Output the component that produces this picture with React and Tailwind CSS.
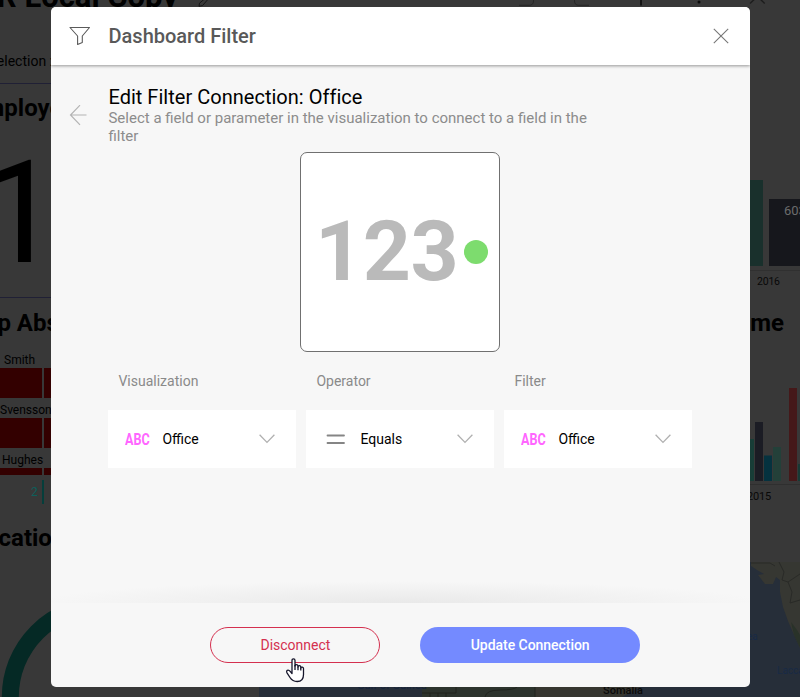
function FilterIcon() {
  return (
    <svg width="22" height="20" viewBox="0 0 22 20" fill="none" stroke="#5a5a5a" strokeWidth="1.1" strokeLinejoin="round">
      <path d="M1 1.5H20.5L13.3 10V16.5L8.6 18.5V10Z" />
    </svg>
  );
}

function CloseIcon() {
  return (
    <svg width="16" height="16" viewBox="0 0 16 16" stroke="#777" strokeWidth="1.1">
      <path d="M0.8 0.8 15.2 15.2M15.2 0.8 0.8 15.2" />
    </svg>
  );
}

function BackIcon() {
  return (
    <svg width="18" height="21" viewBox="0 0 18 21" fill="none" stroke="#b4b4b4" strokeWidth="1.2">
      <path d="M17.5 10H1.5M11 0.2 1.5 10 11 19.8" />
    </svg>
  );
}

function Chevron() {
  return (
    <svg width="16" height="10" viewBox="0 0 16 10" fill="none" stroke="#b0b0b0" strokeWidth="1.3">
      <path d="M0.6 0.8 8 8.4 15.4 0.8" />
    </svg>
  );
}

function AbcIcon() {
  return (
    <span className="flex w-[25px] items-center text-[17px] leading-none font-bold text-[#ff66ff]">
      <span className="origin-left scale-x-[0.74]">ABC</span>
    </span>
  );
}

function EqualsIcon() {
  return (
    <svg width="19" height="11" viewBox="0 0 19 11" stroke="#858585" strokeWidth="1.8" strokeLinecap="round">
      <path d="M1.5 1.5H18M1.5 9H18" />
    </svg>
  );
}

function Picker({ label, icon, value }) {
  return (
    <div className="w-[188px]">
      <div className="h-[38px] pl-[10px] text-[14px] leading-[18px] text-[#8a8a8a]">{label}</div>
      <div className="flex h-[58px] items-center bg-white pr-[21px] pl-[17px]">
        <div className="flex w-[37px] items-center">{icon}</div>
        <div className="flex-1 text-[14px] leading-[20px] text-black">{value}</div>
        <Chevron />
      </div>
    </div>
  );
}

function LeftColumn() {
  return (
    <div className="flex w-[259px] flex-col overflow-hidden whitespace-nowrap text-black">
      <div className="flex h-[53px] w-[215px] items-start gap-[20px]">
        <div className="-mt-[20px] flex w-[178px] shrink-0 justify-end text-[31px] leading-[34px] font-bold">HR Local Copy</div>
        <svg className="shrink-0" width="16" height="8" viewBox="0 0 16 8" fill="none" stroke="#151515">
          <path d="M10 -4 1.5 3.2 1 6.3 4.5 5.6 12 -3" />
        </svg>
      </div>
      <div className="flex h-[31px] w-[53px] justify-end border-b border-[#202035] text-[14px] leading-[17px]">Selection :</div>
      <div className="-ml-[30px] h-[49px] pt-[10px] text-[24px] leading-[28px] font-bold">Employees</div>
      <div className="h-[165px] border-b border-[#202035] text-[143px] leading-[160px]"><span className="-ml-[20px]">1</span></div>
      <div className="-ml-[29px] h-[54px] pt-[11px] text-[24px] leading-[28px] font-bold">Top Absences</div>
      <div className="h-[16px] pl-[4px] text-[12px] leading-[16px]">Smith</div>
      <div className="flex h-[30px] shrink-0 gap-[2px]"><div className="w-[42px] bg-[#330000]" /><div className="w-[20px] bg-[#330000]" /></div>
      <div className="h-[20px] pt-[4px] text-[12px] leading-[16px]">Svensson</div>
      <div className="flex h-[30px] shrink-0 gap-[2px]"><div className="w-[42px] bg-[#330000]" /><div className="w-[20px] bg-[#330000]" /></div>
      <div className="h-[20px] pt-[4px] pl-[2px] text-[12px] leading-[16px]">Hughes</div>
      <div className="flex h-[7px] shrink-0 gap-[2px]"><div className="w-[42px] bg-[#330000]" /><div className="w-[20px] bg-[#330000]" /></div>
      <div className="mt-[5px] flex h-[24px] shrink-0 items-center gap-[4px] pl-[31px] text-[12px] text-[#0e5f5b]"><span className="leading-[16px]">2</span><span className="h-[24px] w-[2px] bg-[#053e3b]" /></div>
      <div className="-ml-[28px] mt-[20px] text-[24px] leading-[28px] font-bold">Location</div>
      <svg className="mt-[45px] shrink-0" width="204" height="100" viewBox="0 0 204 100" fill="none">
        <path d="M10.3 100A91.7 91.7 0 0 1 102 8.3" stroke="#052925" strokeWidth="17" />
      </svg>
    </div>
  );
}

function RightColumn() {
  return (
    <div className="flex w-[541px] flex-col overflow-hidden">
      <svg className="shrink-0" width="541" height="180" viewBox="259 0 541 180" fill="none" stroke="#1d1d1d">
        <path d="M519 5.3H529Q533.5 5.3 533.5 1V0M589 5.3H579Q574.5 5.3 574.5 1V0" stroke="#262626" />
        <path d="M641 0V5.5" stroke="#0a0a0a" strokeWidth="1.6" />
        <circle cx="699" cy="2" r="1.5" fill="#090909" stroke="none" />
        <path d="M750 3.4 757.4 -3.5 764.7 3.4" strokeWidth="1.4" />
      </svg>
      <div className="flex h-[86px] shrink-0 items-end justify-end gap-[6px]">
        <div className="h-[86px] w-[23px] bg-[#19302c]" />
        <div className="h-[67px] w-[31px] overflow-hidden bg-[#16171c] pt-[4px] pl-[15px] text-[13px] leading-[16px] text-[#6c6c6c]">603</div>
      </div>
      <div className="mt-[4px] ml-[491px] h-[39px] shrink-0 border-t border-[#303030] pt-[4px] pl-[7px] text-[10.5px] leading-[13px] tracking-[-0.2px] text-[#080808]">2016</div>
      <div className="flex w-[525px] shrink-0 justify-end text-[24px] leading-[28px] font-bold text-black">Time</div>
      <svg className="mt-[45px] shrink-0" width="541" height="103" viewBox="259 382 541 103">
        <path fill="#183d37" d="M746 439h8v42h-8z" />
        <path fill="#1b1c24" d="M755 422h8v59h-8z" />
        <path fill="#05323f" d="M764 455.5h8V481h-8z" />
        <path fill="#234039" d="M773 447h8v34h-8z" />
        <path fill="#451819" d="M789 388h8v93h-8z" />
        <path fill="#173a35" d="M798 464h4v17h-4z" />
        <path fill="#2f2f2f" d="M750 484h50v1h-50z" />
      </svg>
      <div className="mt-[5px] h-[72px] shrink-0 pl-[488px] text-[11px] leading-[13px] tracking-[-0.2px] text-[#080808]">2015</div>
      <svg className="shrink-0" width="541" height="135" viewBox="259 562 541 135">
        <path fill="#262e39" d="M259 562h541v135H259z" />
        <path fill="#363732" d="M751 562H800V648L795 637 788 621 783 607 780 592 780 580 776 577 773 584 765 584 758 575 764 574 757 570 751 566Z" />
        <path fill="#293229" d="M791 622 797 630 800 635V648L794 635Z" />
        <path d="M779 562 784 572 782 580 788 582 800 574M788 582 792 592 790 603 800 600M751 563H770L775 566" fill="none" stroke="#292a27" />
        <path fill="#2c332d" d="M422 687H535V697H422z" />
        <path fill="#363630" d="M535 687H640L622 697H535z" />
        <path d="M422 693H456V687M430 693V697M438 693V697M446 693V697M485 697Q486 690 500 690T517 687M535 687V697" fill="none" stroke="#20241f" />
        <g fontFamily="Roboto, sans-serif">
          <text x="741" y="640" fontSize="10" fill="#182a46">Sea</text>
          <text x="777" y="674" fontSize="10" fill="#182a46">Laccadive</text>
          <text x="357" y="689" fontSize="11" fill="#15233b">Gulf of Guinea</text>
          <text x="603" y="694" fontSize="11" fontWeight="500" fill="#0b0b0b">Somalia</text>
        </g>
      </svg>
    </div>
  );
}

function HandCursor() {
  return (
    <svg className="absolute top-[651px] left-[235px]" width="19" height="25" viewBox="0 0 19 25" fill="white" stroke="#15152a" strokeWidth="1.3" strokeLinejoin="round">
      <path d="M6 2.4Q6 0.8 7.5 0.8T9 2.4V8Q9.2 6.6 10.5 6.6T12 8V9Q12.2 7.6 13.4 7.7T14.8 9V10Q15.1 8.8 16.3 9.1T17.5 10.6V16.5Q17.5 23.5 11.2 23.5 6.5 23.5 4 19.5L1 14.8Q0.2 13 1.3 12.3 2.8 11.7 4.2 13.4L6 15.5Z" />
      <path d="M9 7V12M12 8.5V12.2M14.8 9.5V12.6" fill="none" />
    </svg>
  );
}

export default function App() {
  return (
    <div className="relative flex h-[697px] w-[800px] overflow-hidden bg-[#383838] font-[Roboto,sans-serif]">
      <LeftColumn />
      <RightColumn />
      <div className="absolute top-[7px] left-[51px] h-[680px] w-[699px]">
        <div className="flex h-full flex-col overflow-hidden rounded-[5px] bg-[#f7f7f7]">
          <header className="z-10 flex h-[58px] shrink-0 items-center bg-white pr-[21px] pl-[18px] shadow-[0_1px_3px_rgba(0,0,0,0.4)]">
            <FilterIcon />
            <h1 className="ml-[17.5px] flex-1 text-[20px] leading-[24px] font-medium text-[#595959]">Dashboard Filter</h1>
            <CloseIcon />
          </header>
          <main className="flex flex-1 flex-col pl-[57.45px]">
            <div className="-ml-[39px] flex h-[87px] pt-[20px]">
              <div className="w-[39px] pt-[20px]"><BackIcon /></div>
              <div className="w-[500px]">
                <h2 className="text-[20px] leading-[24px] tracking-[0.02px] text-black">Edit Filter Connection: Office</h2>
                <p className="text-[15px] leading-[18px] text-[#8c8c8c]">Select a field or parameter in the visualization to connect to a field in the filter</p>
              </div>
            </div>
            <div className="ml-[192px] flex h-[200px] w-[200px] items-center rounded-[7px] border border-[#707070] bg-white pl-[13.5px]">
              <span className="w-[149px] shrink-0 text-[84px] leading-none font-bold tracking-[-0.4px] text-[#bababa]">123</span>
              <span className="h-[24px] w-[24px] shrink-0 rounded-full bg-[#7ddc6e]" />
            </div>
            <div className="mt-[20px] flex gap-[10px]">
              <Picker label="Visualization" icon={<AbcIcon />} value="Office" />
              <Picker label="Operator" icon={<span className="pl-[2.5px]"><EqualsIcon /></span>} value="Equals" />
              <Picker label="Filter" icon={<AbcIcon />} value="Office" />
            </div>
            <div className="mt-auto -ml-[57.45px] h-[22px] bg-[radial-gradient(ellipse_52%_100%_at_50%_100%,#e9e9e9,#f7f7f7)]" />
          </main>
          <footer className="flex h-[84px] shrink-0 items-start gap-[40px] pt-[24px] pl-[159.45px]">
            <button className="h-[36px] w-[170px] rounded-full border border-[#d4304f] text-[14px] text-[#d4304f]">Disconnect</button>
            <button className="h-[36px] w-[219.5px] rounded-full bg-[#748aff] text-[14px] font-medium tracking-[-0.04px] text-white">Update Connection</button>
          </footer>
        </div>
        <HandCursor />
      </div>
    </div>
  );
}
